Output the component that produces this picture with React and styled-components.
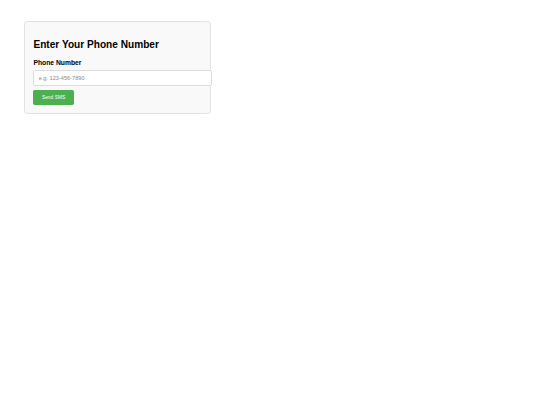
import styled, { createGlobalStyle } from "styled-components";

// the reference is a 1280px page shown at 540px, so sizes are scaled by 0.421875
const GlobalStyle = createGlobalStyle`
    html, body {
        margin: 0;
        padding: 0;
        font-family: "Liberation Sans", Arial, sans-serif;
        background: #ffffff;
    }
`;

const Page = styled.div`
    padding: 21px 0 0 24px;
`;

const Card = styled.div`
    width: 167.75px;
    padding: 8.44px;
    background-color: #f9f9f9;
    border: 1px solid #e2e2e2;
    border-radius: 3.4px;
`;

const Title = styled.h2`
    font-size: 10.125px;
    line-height: 11.6px;
    font-weight: bold;
    margin: 8.4px 0;
    color: #000;
`;

const Label = styled.label`
    display: block;
    font-size: 6.75px;
    line-height: 7.8px;
    font-weight: bold;
    margin-bottom: 3.8px;
    color: #000;
`;

const Input = styled.input`
    display: block;
    width: 100%;
    height: 13.2px;
    padding: 0 4.22px;
    margin: 0 0 4.2px 0;
    font-family: "Liberation Sans", Arial, sans-serif;
    font-size: 5.625px;
    border: 1px solid #dcdcdc;
    border-radius: 1.7px;
    background: #fff;
    box-sizing: content-box;
    outline: none;

    &::placeholder {
        color: #8a8a8a;
    }
`;

const SendButton = styled.button`
    display: block;
    height: 14.8px;
    padding: 0 8.44px;
    font-family: "Liberation Sans", Arial, sans-serif;
    font-size: 4.9px;
    color: #fff;
    background-color: #4caf50;
    border: none;
    border-radius: 1.7px;
    cursor: pointer;
`;

const App = () => {
    return (
        <Page>
            <GlobalStyle />
            <Card>
                <Title>Enter Your Phone Number</Title>
                <Label htmlFor="phone">Phone Number</Label>
                <Input id="phone" type="tel" placeholder="e.g. 123-456-7890" />
                <SendButton>Send SMS</SendButton>
            </Card>
        </Page>
    );
};

export default App;
